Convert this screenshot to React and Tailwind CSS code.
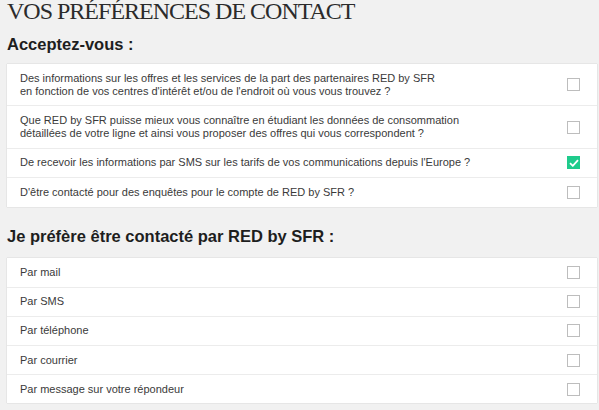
const consents = [
  {
    text: ["Des informations sur les offres et les services de la part des partenaires RED by SFR", "en fonction de vos centres d'intérêt et/ou de l'endroit où vous vous trouvez ?"],
    checked: false,
  },
  {
    text: ["Que RED by SFR puisse mieux vous connaître en étudiant les données de consommation", "détaillées de votre ligne et ainsi vous proposer des offres qui vous correspondent ?"],
    checked: false,
  },
  {
    text: ["De recevoir les informations par SMS sur les tarifs de vos communications depuis l'Europe ?"],
    checked: true,
  },
  {
    text: ["D'être contacté pour des enquêtes pour le compte de RED by SFR ?"],
    checked: false,
  },
];

const channels = ["Par mail", "Par SMS", "Par téléphone", "Par courrier", "Par message sur votre répondeur"];

function Checkbox({ checked }) {
  if (checked) {
    return (
      <span className="flex h-[13px] w-[13px] shrink-0 items-center justify-center bg-[#1fcb8c]">
        <svg width="10" height="8" viewBox="0 0 10 8" fill="none">
          <path d="M1 4.2 L3.8 6.8 L9 1.2" stroke="white" strokeWidth="1.8" />
        </svg>
      </span>
    );
  }
  return <span className="h-[13px] w-[13px] shrink-0 border border-[#bdbdbd] bg-white" />;
}

function Row({ lines, checked, fixed }) {
  return (
    <div className={`flex items-center justify-between border-t border-[#ececec] pl-[13px] pr-[17px] first:border-t-0 ${fixed ? "h-[29.2px]" : ""}`}>
      <div className={`${fixed ? "" : "py-[7.7px]"} text-[11px] leading-[13px] text-[#3a3a3a]`}>
        {lines.map((l) => (
          <div key={l}>{l}</div>
        ))}
      </div>
      <Checkbox checked={checked} />
    </div>
  );
}

export default function App() {
  return (
    <div className="min-h-[410px] w-[599px] overflow-hidden bg-[#f1f1f1] pl-[7px] pr-[2px] font-['Liberation_Sans',Arial,sans-serif]">
      <h1 className="pt-[1px] font-['Liberation_Serif',serif] text-[24px] leading-[20px] tracking-[-1px] text-[#2b2b2b]">
        VOS PRÉFÉRENCES DE CONTACT
      </h1>

      <h2 className="mt-[13px] text-[16.5px] font-bold leading-[20px] text-[#1e1e1e]">Acceptez-vous :</h2>
      <div className="mt-[10px] bg-white shadow-[0_0_1px_rgba(0,0,0,0.25)]">
        {consents.map((c, i) => (
          <Row key={i} lines={c.text} checked={c.checked} />
        ))}
      </div>

      <h2 className="mt-[19px] text-[16.5px] font-bold leading-[20px] text-[#1e1e1e]">
        Je préfère être contacté par RED by SFR :
      </h2>
      <div className="mt-[12px] bg-white shadow-[0_0_1px_rgba(0,0,0,0.25)]">
        {channels.map((c) => (
          <Row key={c} lines={[c]} checked={false} fixed />
        ))}
      </div>
    </div>
  );
}
